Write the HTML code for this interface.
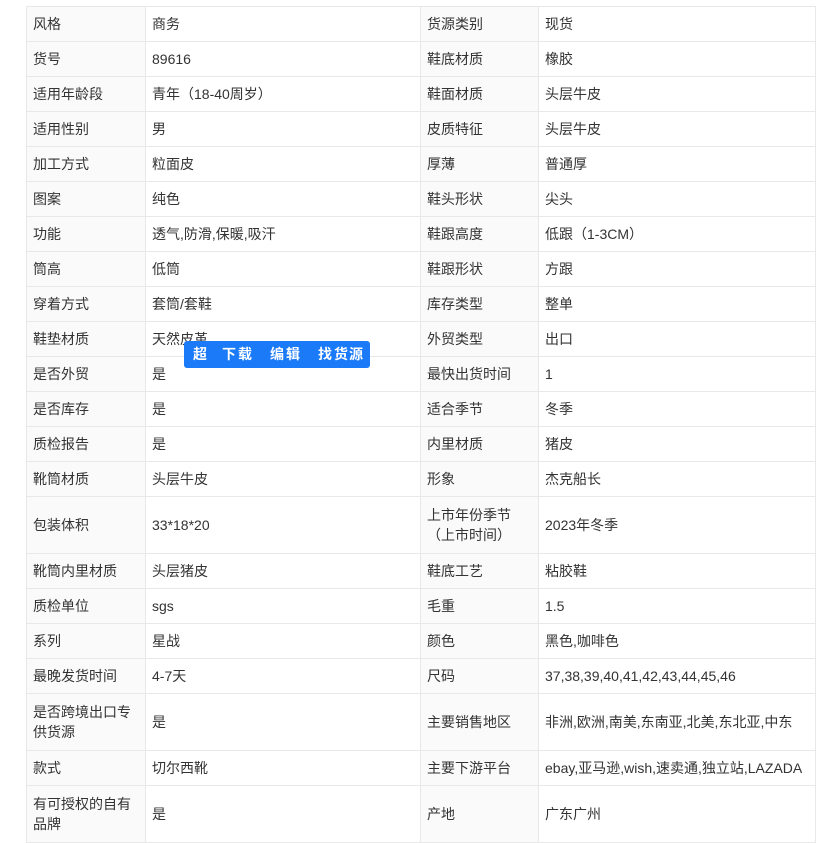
<!DOCTYPE html>
<html><head><meta charset="utf-8"><style>
body{margin:0;background:#fff;width:828px;height:829px;overflow:hidden;position:relative;font-family:"Liberation Sans","Noto Sans CJK SC",sans-serif;font-size:14px;color:#333}
table{position:absolute;left:26px;top:6px;border-collapse:collapse;table-layout:fixed;width:789px}
td{border:1px solid #e8e8e8;padding:0 6px;height:34px;line-height:20px;vertical-align:middle}
td.l{background:#fafafa}
tr.t td{height:56px}
.btn{position:absolute;left:184px;top:341px;width:186px;height:27px;background:#1a7af8;border-radius:3px;color:#fff;font-weight:bold;font-size:14px;line-height:27px}
.btn span{position:absolute;top:0}
</style></head><body>
<table>
<colgroup><col style="width:119px"><col style="width:275px"><col style="width:118px"><col style="width:277px"></colgroup>
<tr><td class="l">风格</td><td>商务</td><td class="l">货源类别</td><td>现货</td></tr>
<tr><td class="l">货号</td><td>89616</td><td class="l">鞋底材质</td><td>橡胶</td></tr>
<tr><td class="l">适用年龄段</td><td>青年（18-40周岁）</td><td class="l">鞋面材质</td><td>头层牛皮</td></tr>
<tr><td class="l">适用性别</td><td>男</td><td class="l">皮质特征</td><td>头层牛皮</td></tr>
<tr><td class="l">加工方式</td><td>粒面皮</td><td class="l">厚薄</td><td>普通厚</td></tr>
<tr><td class="l">图案</td><td>纯色</td><td class="l">鞋头形状</td><td>尖头</td></tr>
<tr><td class="l">功能</td><td>透气,防滑,保暖,吸汗</td><td class="l">鞋跟高度</td><td>低跟（1-3CM）</td></tr>
<tr><td class="l">筒高</td><td>低筒</td><td class="l">鞋跟形状</td><td>方跟</td></tr>
<tr><td class="l">穿着方式</td><td>套筒/套鞋</td><td class="l">库存类型</td><td>整单</td></tr>
<tr><td class="l">鞋垫材质</td><td>天然皮革</td><td class="l">外贸类型</td><td>出口</td></tr>
<tr><td class="l">是否外贸</td><td>是</td><td class="l">最快出货时间</td><td>1</td></tr>
<tr><td class="l">是否库存</td><td>是</td><td class="l">适合季节</td><td>冬季</td></tr>
<tr><td class="l">质检报告</td><td>是</td><td class="l">内里材质</td><td>猪皮</td></tr>
<tr><td class="l">靴筒材质</td><td>头层牛皮</td><td class="l">形象</td><td>杰克船长</td></tr>
<tr class="t"><td class="l">包装体积</td><td>33*18*20</td><td class="l">上市年份季节（上市时间）</td><td>2023年冬季</td></tr>
<tr><td class="l">靴筒内里材质</td><td>头层猪皮</td><td class="l">鞋底工艺</td><td>粘胶鞋</td></tr>
<tr><td class="l">质检单位</td><td>sgs</td><td class="l">毛重</td><td>1.5</td></tr>
<tr><td class="l">系列</td><td>星战</td><td class="l">颜色</td><td>黑色,咖啡色</td></tr>
<tr><td class="l">最晚发货时间</td><td>4-7天</td><td class="l">尺码</td><td>37,38,39,40,41,42,43,44,45,46</td></tr>
<tr class="t"><td class="l">是否跨境出口专供货源</td><td>是</td><td class="l">主要销售地区</td><td>非洲,欧洲,南美,东南亚,北美,东北亚,中东</td></tr>
<tr><td class="l">款式</td><td>切尔西靴</td><td class="l">主要下游平台</td><td>ebay,亚马逊,wish,速卖通,独立站,LAZADA</td></tr>
<tr class="t"><td class="l">有可授权的自有品牌</td><td>是</td><td class="l">产地</td><td>广东广州</td></tr>
</table>
<div class="btn"><span style="left:9px">超</span><span style="left:38px">下</span><span style="left:54px">载</span><span style="left:86px">编</span><span style="left:102px">辑</span><span style="left:134px">找</span><span style="left:150px">货</span><span style="left:165px">源</span></div>
</body></html>
